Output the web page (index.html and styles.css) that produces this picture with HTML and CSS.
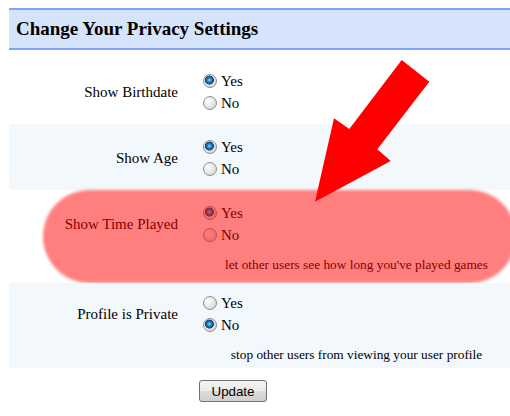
FILE: index.html
```html
<!DOCTYPE html>
<html lang="en">
<head>
  <meta charset="UTF-8" />
  <title>Change Your Privacy Settings</title>
  <link rel="stylesheet" href="styles.css">
</head>
<body>
  <div class="page">
    <h3 class="panel-title">Change Your Privacy Settings</h3>

    <form class="settings" onsubmit="event.preventDefault();">
      <div class="row">
        <div class="row-label">Show Birthdate</div>
        <div class="row-options">
          <label><input type="radio" name="birthdate" checked />Yes</label>
          <label><input type="radio" name="birthdate" />No</label>
        </div>
      </div>

      <div class="row alt">
        <div class="row-label">Show Age</div>
        <div class="row-options">
          <label><input type="radio" name="age" checked />Yes</label>
          <label><input type="radio" name="age" />No</label>
        </div>
      </div>

      <div class="row highlighted">
        <div class="row-label">Show Time Played</div>
        <div class="row-options">
          <label><input type="radio" name="timeplayed" checked />Yes</label>
          <label><input type="radio" name="timeplayed" />No</label>
        </div>
        <div class="row-help">let other users see how long you've played games</div>
        <div class="marker"></div>
      </div>

      <div class="row alt last">
        <div class="row-label">Profile is Private</div>
        <div class="row-options">
          <label><input type="radio" name="private" />Yes</label>
          <label><input type="radio" name="private" checked />No</label>
        </div>
        <div class="row-help">stop other users from viewing your user profile</div>
      </div>

      <div class="actions">
        <button type="submit">Update</button>
      </div>
    </form>

    <!-- big red pointer drawn over the rows -->
    <svg class="arrow" width="125" height="150" viewBox="0 0 125 150">
      <path d="M91.7 5 L119.3 26.7 L67.3 94.3 L80.7 106 L5 146.7 L24 63.3 L39.3 74 Z" fill="#ff0000" />
    </svg>
  </div>
</body>
</html>
```

FILE: styles.css
```css
* {
  box-sizing: border-box;
}

body {
  margin: 0;
  background: #fff;
  font-family: "Liberation Serif", "Times New Roman", serif;
  color: #000;
}

.page {
  position: relative;
  padding: 8px 0 0 9px;
  height: 416px;
  overflow: hidden;
}

.panel-title {
  margin: 0;
  height: 42px;
  padding: 0 7px;
  background: #d6e4fb;
  border-top: 2px solid #7fa4f5;
  border-bottom: 2px solid #7fa4f5;
  font-size: 19px;
  font-weight: bold;
  line-height: 37px;
}

.settings {
  margin: 8px 0 0;
}

.row {
  position: relative;
  display: grid;
  grid-template-columns: 194px 1fr;
  padding: 12px 0 10px;
  font-size: 15px;
}

.row.alt {
  background: #f3f8fd;
}

.row.last {
  padding: 9px 0 5px;
}

.row-label {
  align-self: center;
  text-align: right;
  padding-right: 25px;
}

.row-options label {
  display: block;
  line-height: 22px;
}

.row-help {
  grid-column: 2;
  margin-top: 11px;
  font-size: 13.33px;
  line-height: 16px;
  text-align: center;
}

input[type="radio"] {
  appearance: none;
  -webkit-appearance: none;
  width: 14px;
  height: 14px;
  margin: 0 4px 0 0;
  border: 1px solid #8d8f91;
  border-radius: 50%;
  background: radial-gradient(circle at 35% 35%, #ffffff 0, #e4e4e4 55%, #c9c9c9 100%);
  vertical-align: -2px;
}

input[type="radio"]:checked {
  background:
    radial-gradient(circle at 45% 42%, #a8e2ff 0, #3595d2 1.5px, #105a92 3.5px, #163d5f 4.2px, transparent 4.8px),
    radial-gradient(circle at 35% 35%, #ffffff 0, #e4e4e4 55%, #c9c9c9 100%);
}

.marker {
  position: absolute;
  top: 0;
  bottom: 0;
  left: 34px;
  right: -6px;
  border-radius: 47px;
  background: rgba(255, 0, 0, 0.5);
  filter: blur(1.5px);
  pointer-events: none;
}

.actions {
  padding: 12px 0 0 190px;
}

button {
  width: 68px;
  height: 22px;
  padding: 0;
  border: 1px solid #707070;
  border-radius: 3px;
  background: linear-gradient(#f2f2f2, #ebebeb 50%, #dddddd 50%, #cfcfcf);
  font-family: "Liberation Sans", Arial, sans-serif;
  font-size: 13.33px;
  color: #000;
}

.arrow {
  position: absolute;
  left: 310px;
  top: 55px;
  pointer-events: none;
}
```
